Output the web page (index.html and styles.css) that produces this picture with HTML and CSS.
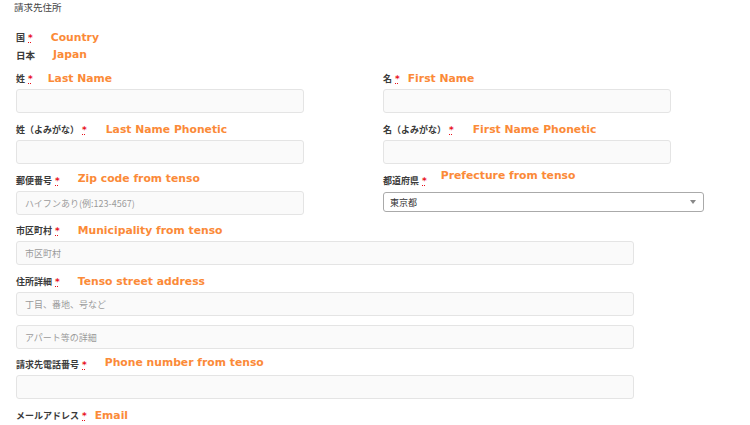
FILE: index.html
```html
<!DOCTYPE html>
<html lang="ja">
<head>
<meta charset="utf-8">
<title>請求先住所</title>
<link rel="stylesheet" href="styles.css">
</head>
<body>
<div class="page">
  <div class="title">請求先住所</div>
  <div class="form">
    <div class="row-label country">
      <span class="lbl">国</span><abbr class="req" title="required">*</abbr>
      <span class="ann">Country</span>
    </div>
    <div class="row-label country-value">
      <span class="lbl value">日本</span>
      <span class="ann">Japan</span>
    </div>

    <div class="grid">
      <div class="field">
        <div class="row-label">
          <span class="lbl">姓</span><abbr class="req" title="required">*</abbr>
          <span class="ann ann--l">Last Name</span>
        </div>
        <input class="inp" type="text">
      </div>
      <div class="field">
        <div class="row-label">
          <span class="lbl">名</span><abbr class="req" title="required">*</abbr>
          <span class="ann ann--tight">First Name</span>
        </div>
        <input class="inp" type="text">
      </div>

      <div class="field">
        <div class="row-label">
          <span class="lbl">姓（よみがな）</span><abbr class="req" title="required">*</abbr>
          <span class="ann ann--wide">Last Name Phonetic</span>
        </div>
        <input class="inp" type="text">
      </div>
      <div class="field">
        <div class="row-label">
          <span class="lbl">名（よみがな）</span><abbr class="req" title="required">*</abbr>
          <span class="ann ann--wide">First Name Phonetic</span>
        </div>
        <input class="inp" type="text">
      </div>

      <div class="field">
        <div class="row-label">
          <span class="lbl">郵便番号</span><abbr class="req" title="required">*</abbr>
          <span class="ann ann--up">Zip code from tenso</span>
        </div>
        <input class="inp" type="text" placeholder="ハイフンあり(例:123-4567)">
      </div>
      <div class="field">
        <div class="row-label">
          <span class="lbl">都道府県</span><abbr class="req" title="required">*</abbr>
          <span class="ann ann--mid ann--up2">Prefecture from tenso</span>
        </div>
        <div class="select-wrap">
          <select class="sel">
            <option>東京都</option>
          </select>
        </div>
      </div>
    </div>

    <div class="field">
      <div class="row-label">
        <span class="lbl">市区町村</span><abbr class="req" title="required">*</abbr>
        <span class="ann">Municipality from tenso</span>
      </div>
      <input class="inp inp--full" type="text" placeholder="市区町村">
    </div>

    <div class="field field--tight">
      <div class="row-label">
        <span class="lbl">住所詳細</span><abbr class="req" title="required">*</abbr>
        <span class="ann">Tenso street address</span>
      </div>
      <input class="inp inp--full" type="text" placeholder="丁目、番地、号など">
      <input class="inp inp--full inp--extra" type="text" placeholder="アパート等の詳細">
    </div>

    <div class="field">
      <div class="row-label">
        <span class="lbl">請求先電話番号</span><abbr class="req" title="required">*</abbr>
        <span class="ann ann--up">Phone number from tenso</span>
      </div>
      <input class="inp inp--full" type="text">
    </div>

    <div class="field">
      <div class="row-label">
        <span class="lbl">メールアドレス</span><abbr class="req" title="required">*</abbr>
        <span class="ann ann--tight">Email</span>
      </div>
    </div>
  </div>
</div>
</body>
</html>
```

FILE: styles.css
```css
html, body {
  margin: 0;
  padding: 0;
  background: #ffffff;
}

body {
  font-family: "Noto Sans CJK JP", "Noto Sans", sans-serif;
  color: #333333;
  overflow: hidden;
}

.page {
  padding: 0 14px;
}

.title {
  font-size: 9.5px;
  line-height: 14px;
  color: #444444;
}

.form {
  padding-left: 2px;
}

.row-label {
  display: flex;
  align-items: center;
  height: 14px;
  white-space: nowrap;
}

.country {
  margin-top: 17px;
}

.country-value {
  margin-top: 3px;
  margin-bottom: 10px;
}

.lbl {
  font-size: 9px;
  line-height: 14px;
  font-weight: 700;
  color: #3a3a3a;
}

.lbl.value {
  font-size: 9.5px;
}

.req {
  margin-left: 3px;
  font-size: 9px;
  line-height: 10px;
  color: #e8101a;
  font-weight: 700;
  text-decoration: underline dotted #e8101a;
  text-underline-offset: 1px;
  font-family: "DejaVu Sans", sans-serif;
  cursor: help;
  align-self: center;
}

.ann {
  margin-left: 18px;
  font-family: "DejaVu Sans", Verdana, sans-serif;
  font-weight: 700;
  font-size: 10.8px;
  line-height: 14px;
  color: #fb8a38;
}

.ann--tight { margin-left: 8px; }
.ann--mid { margin-left: 14px; }
.ann--l { margin-left: 15px; }
.ann--wide { margin-left: 19px; }
.ann--up { margin-bottom: 5px; }
.ann--up2 { margin-bottom: 10px; }

.grid {
  display: grid;
  grid-template-columns: 288px 321px;
  column-gap: 79px;
  row-gap: 10px;
  margin-bottom: 9px;
}

.grid .field {
  margin-bottom: 0;
}

.field {
  display: flex;
  flex-direction: column;
  margin-bottom: 10px;
}

.field--tight {
  margin-bottom: 9px;
}

.field .row-label {
  margin-bottom: 3px;
}

.inp {
  display: block;
  box-sizing: border-box;
  width: 288px;
  height: 24px;
  margin: 0;
  padding: 0 8px;
  border: 1px solid #e4e4e4;
  border-radius: 3px;
  background: #fafafa;
  font-family: "Noto Sans CJK JP", sans-serif;
  font-size: 9px;
  color: #333333;
  outline: none;
}

.inp::placeholder {
  color: #9a9a9a;
}

.inp--full {
  width: 618px;
}

.inp--extra {
  margin-top: 9px;
}

.select-wrap {
  position: relative;
  margin-top: 1px;
  width: 321px;
  height: 20px;
}

.sel {
  display: block;
  box-sizing: border-box;
  width: 100%;
  height: 20px;
  margin: 0;
  padding: 0 6px;
  border: 1px solid #aaaaaa;
  border-radius: 3px;
  background: #ffffff;
  font-family: "Noto Sans CJK JP", sans-serif;
  font-size: 9px;
  color: #333333;
  -webkit-appearance: none;
  appearance: none;
  outline: none;
}

.select-wrap::after {
  content: "";
  position: absolute;
  right: 8px;
  top: 8px;
  width: 0;
  height: 0;
  border-left: 3px solid transparent;
  border-right: 3px solid transparent;
  border-top: 4px solid #888888;
  pointer-events: none;
}
```
